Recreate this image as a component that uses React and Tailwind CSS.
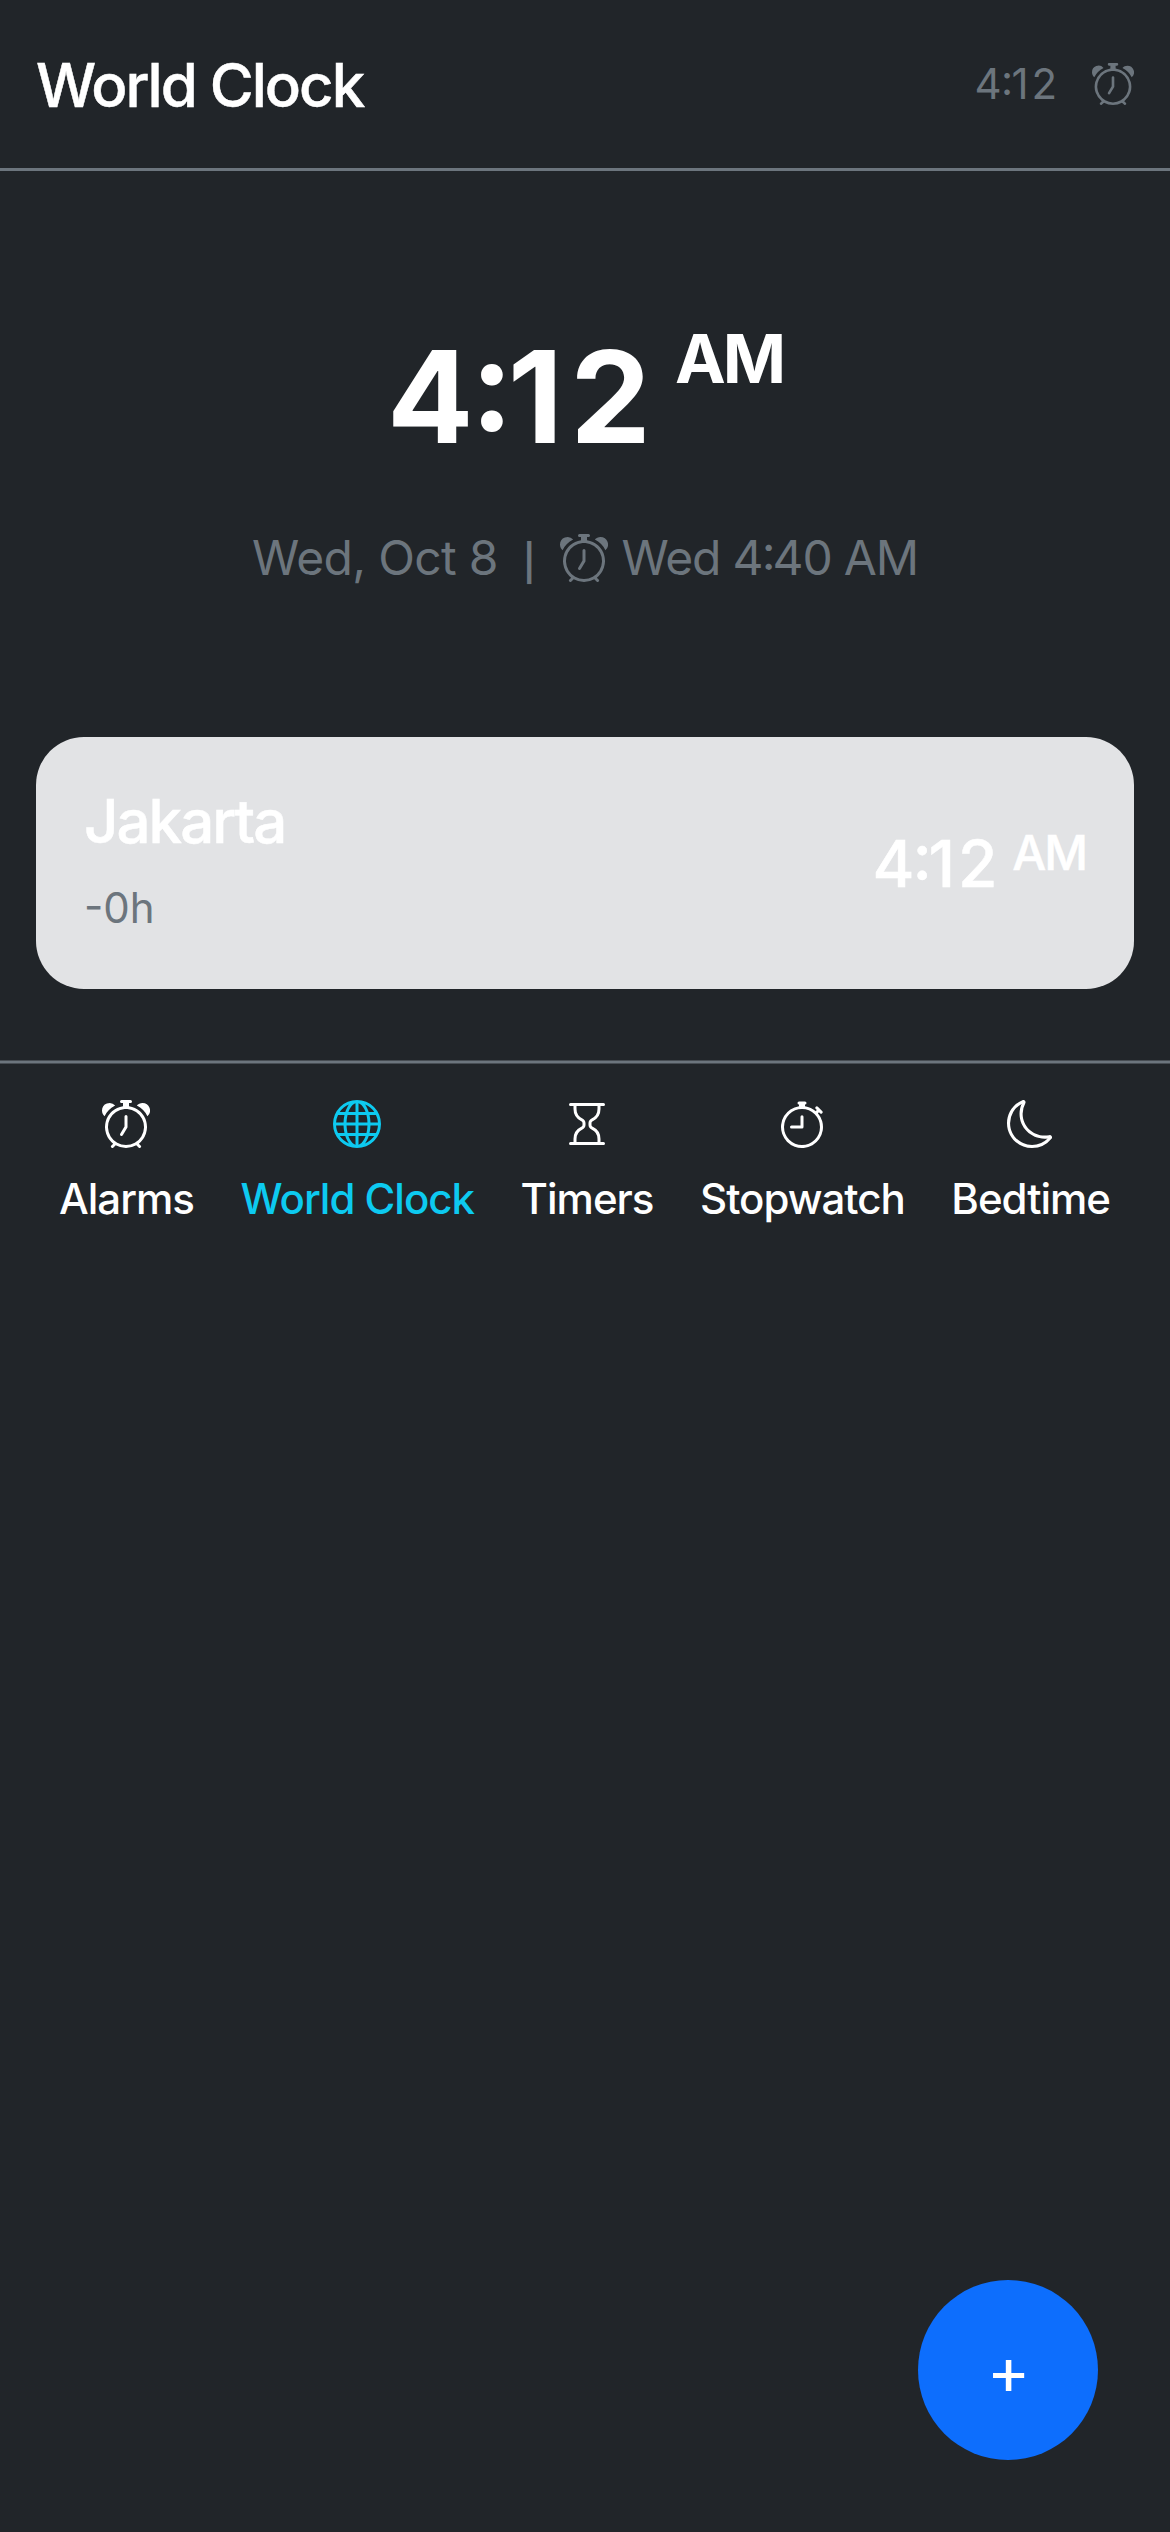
import { BsAlarm, BsGlobe, BsHourglass, BsStopwatch, BsMoon } from "react-icons/bs";

const tabs = [
  { label: "Alarms", Icon: BsAlarm },
  { label: "World Clock", Icon: BsGlobe, active: true },
  { label: "Timers", Icon: BsHourglass },
  { label: "Stopwatch", Icon: BsStopwatch },
  { label: "Bedtime", Icon: BsMoon },
];

// Vertically centred colon between digits.
function Colon() {
  return <span className="relative top-[-0.095em] ml-[-0.015em] mr-[-0.035em]">:</span>;
}

function FourTwelve({ className }) {
  return (
    <span className={className}>
      4<Colon /><span className="mr-[0.065em]">1</span>2
    </span>
  );
}

function Header() {
  return (
    <header className="flex h-[171px] items-start justify-between border-b-[3px] border-[#6c757d] px-9">
      <h1 className="mt-[49px] text-[60px] leading-[72px] font-medium tracking-[-2px] [-webkit-text-stroke:0.5px]">World Clock</h1>
      <div className="mt-[52px] flex items-center gap-[35px] text-[42px] leading-[63px] text-[#6c757d]">
        <FourTwelve />
        <BsAlarm className="size-[42px]" />
      </div>
    </header>
  );
}

function CurrentTime() {
  return (
    <section className="flex h-[565.5px] flex-col items-center">
      <div className="mt-[149px] flex h-[154px] items-start gap-[25px] font-bold">
        <FourTwelve className="text-[128px] leading-[154px] tracking-[-1px]" />
        <span className="text-[68px] leading-[76px] tracking-[-3px]">AM</span>
      </div>
      <div className="mt-[48px] flex items-center text-[48px] leading-[72px] text-[#6c757d]">
        <span className="tracking-[-0.7px]">Wed, Oct 8</span>
        <span className="mt-[10px] ml-[25px] text-[36px] leading-[54px] font-semibold">|</span>
        <BsAlarm className="ml-[24px] size-12" />
        <span className="ml-[14px] tracking-[-1.2px]">Wed 4<Colon />40 AM</span>
      </div>
    </section>
  );
}

function CityCard() {
  return (
    <article className="mx-9 flex h-[252px] items-start justify-between rounded-[48px] bg-[#e2e3e5] px-12">
      <div className="mt-[48px]">
        <h2 className="text-[60px] leading-[72px] font-medium tracking-[-2px] [-webkit-text-stroke:0.5px]">Jakarta</h2>
        <p className="mt-[19px] text-[42px] leading-[63px] text-[#6c757d]">-0h</p>
      </div>
      <div className="mt-[79px] flex items-start gap-[16px] font-medium [-webkit-text-stroke:0.5px]">
        <FourTwelve className="text-[64px] leading-[96px] tracking-[-1.2px]" />
        <span className="text-[48px] leading-[73px] tracking-[-2px]">AM</span>
      </div>
    </article>
  );
}

function TabBar() {
  return (
    <nav className="mt-[71.5px]">
      <div className="h-1 border-y border-[#474d53] bg-[#6c757d]" />
      <div className="flex justify-between pt-9 pr-[60px] pl-[59px]">
        {tabs.map(({ label, Icon, active }) => (
          <a key={label} className={active ? "flex flex-col items-center text-[#0dcaf0]" : "flex flex-col items-center"}>
            <Icon className="size-12" />
            <span className="mt-[19px] text-[42px] leading-[63px] font-medium tracking-[-1px]">{label}</span>
          </a>
        ))}
      </div>
    </nav>
  );
}

export default function App() {
  return (
    <main className="min-h-[2532px] bg-[#212529] font-['Inter',sans-serif] text-white">
      <Header />
      <CurrentTime />
      <CityCard />
      <TabBar />
      <button className="fixed right-[72px] bottom-[72px] flex size-[180px] items-center justify-center rounded-full bg-[#0d6efd] pl-px text-[66px] leading-[90px]">
        +
      </button>
    </main>
  );
}
